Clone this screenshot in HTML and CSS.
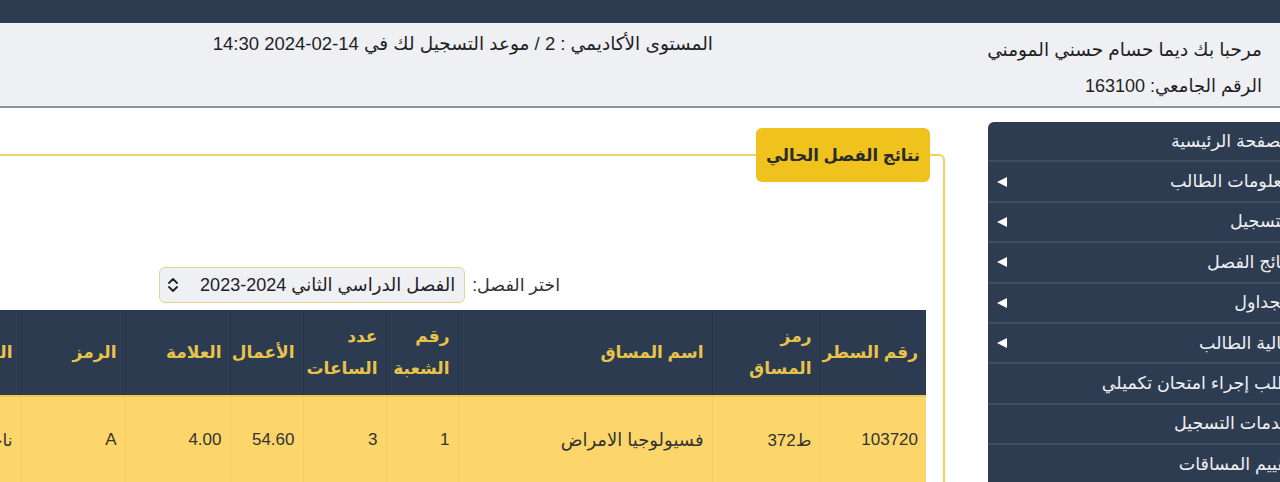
FILE: index.html
```html
<!DOCTYPE html>
<html lang="ar" dir="rtl">
<head>
<meta charset="utf-8">
<title>نتائج الفصل الحالي</title>
<link rel="stylesheet" href="styles.css">
</head>
<body>
<div class="topbar"></div>
<header class="header">
  <div class="user">
    <div>مرحبا بك ديما حسام حسني المومني</div>
    <div>الرقم الجامعي: 163100</div>
  </div>
  <div class="level">المستوى الأكاديمي : 2 / موعد التسجيل لك في 14-02-2024 14:30</div>
</header>
<div class="main">
  <nav class="sidebar">
    <a class="nav-item">الصفحة الرئيسية</a>
    <a class="nav-item">معلومات الطالب<svg class="arrow" viewBox="0 0 10 10" width="10" height="10"><polygon points="0,5 10,0 10,10"/></svg></a>
    <a class="nav-item">التسجيل<svg class="arrow" viewBox="0 0 10 10" width="10" height="10"><polygon points="0,5 10,0 10,10"/></svg></a>
    <a class="nav-item">نتائج الفصل<svg class="arrow" viewBox="0 0 10 10" width="10" height="10"><polygon points="0,5 10,0 10,10"/></svg></a>
    <a class="nav-item">الجداول<svg class="arrow" viewBox="0 0 10 10" width="10" height="10"><polygon points="0,5 10,0 10,10"/></svg></a>
    <a class="nav-item">مالية الطالب<svg class="arrow" viewBox="0 0 10 10" width="10" height="10"><polygon points="0,5 10,0 10,10"/></svg></a>
    <a class="nav-item">طلب إجراء امتحان تكميلي</a>
    <a class="nav-item">خدمات التسجيل</a>
    <a class="nav-item">تقييم المساقات</a>
    <a class="nav-item">تسجيل الخروج</a>
  </nav>
  <section class="content">
    <fieldset class="panel">
      <legend class="panel-title">نتائج الفصل الحالي</legend>
      <div class="term-row">
        <label class="term-label">اختر الفصل:</label>
        <div class="select-wrap">
          <select class="term-select">
            <option>الفصل الدراسي الثاني 2024-2023</option>
          </select>
          <svg class="chev" viewBox="0 0 12 16" width="12" height="16"><path d="M2 6 L6 2 L10 6 M2 10 L6 14 L10 10" fill="none" stroke="#222" stroke-width="1.8" stroke-linecap="round" stroke-linejoin="round"/></svg>
        </div>
      </div>
      <table class="results">
        <colgroup>
          <col class="c1"><col class="c2"><col class="c3"><col class="c4"><col class="c5"><col class="c6"><col class="c7"><col class="c8"><col class="c9">
        </colgroup>
        <thead>
          <tr>
            <th>رقم السطر</th>
            <th>رمز<br>المساق</th>
            <th>اسم المساق</th>
            <th>رقم<br>الشعبة</th>
            <th>عدد<br>الساعات</th>
            <th>الأعمال</th>
            <th>العلامة</th>
            <th>الرمز</th>
            <th>النتيجة</th>
          </tr>
        </thead>
        <tbody>
          <tr>
            <td>103720</td>
            <td>&#x637;372</td>
            <td>فسيولوجيا الامراض</td>
            <td>1</td>
            <td>3</td>
            <td>54.60</td>
            <td>4.00</td>
            <td>A</td>
            <td>ناجح</td>
          </tr>
        </tbody>
      </table>
    </fieldset>
  </section>
</div>
</body>
</html>
```

FILE: styles.css
```css
html, body {
  margin: 0;
  padding: 0;
}
body {
  direction: rtl;
  width: 1280px;
  overflow: hidden;
  background: #ffffff;
  font-family: "Liberation Sans", "DejaVu Sans", sans-serif;
  color: #222;
}
.topbar {
  height: 23px;
  background: #2d3c50;
}
.header {
  height: 74px;
  padding-top: 9px;
  background: #eff0f4;
  border-bottom: 2px solid #8f9195;
  display: flex;
  align-items: flex-start;
  font-size: 18.5px;
  color: #1f1f1f;
}
.user {
  flex: 0 0 567px;
  padding-right: 18px;
  box-sizing: border-box;
  line-height: 36px;
}
.user div:last-child {
  font-size: 18px;
}
.level {
  line-height: 24px;
}
.main {
  display: flex;
  align-items: flex-start;
  gap: 43px;
  padding-top: 14px;
  overflow: hidden;
  height: 400px;
}
.sidebar {
  flex: 0 0 312px;
  margin-right: -20px;
  background: #2d3c50;
  border-top-left-radius: 6px;
  display: flex;
  flex-direction: column;
}
.nav-item {
  display: flex;
  align-items: center;
  justify-content: space-between;
  height: 38.4px;
  border-bottom: 2px solid #3e4f64;
  padding: 0 9px;
  color: #eef0f3;
  font-size: 17.5px;
  white-space: nowrap;
}
.arrow {
  fill: #ffffff;
  width: 10px;
  height: 10px;
}
.content {
  flex: 0 0 1100px;
  padding-top: 6px;
}
.panel {
  margin: 0;
  border: 2px solid #ecd362;
  border-radius: 6px;
  padding: 0 13px 20px 13px;
  min-width: 0;
}
.panel-title {
  padding: 0 10px;
  height: 54px;
  line-height: 54px;
  background: #f0c21e;
  border-radius: 6px;
  font-weight: bold;
  font-size: 16.5px;
  color: #2a2a2a;
}
.term-row {
  display: flex;
  align-items: center;
  gap: 7px;
  margin-top: 85px;
  padding-right: 370px;
  font-size: 17.5px;
}
.term-label {
  color: #333;
}
.select-wrap {
  position: relative;
  width: 306px;
  height: 36px;
}
.term-select {
  appearance: none;
  -webkit-appearance: none;
  width: 100%;
  height: 36px;
  box-sizing: border-box;
  border: 1px solid #e4d48f;
  border-radius: 6px;
  background: #eef0f3;
  padding: 0 9px 0 30px;
  font-family: "Liberation Sans", "DejaVu Sans", sans-serif;
  font-size: 18px;
  color: #222;
  direction: rtl;
}
.chev {
  position: absolute;
  left: 8px;
  top: 10px;
  pointer-events: none;
}
.results {
  margin-top: 7px;
  margin-right: 4px;
  border-collapse: collapse;
  table-layout: fixed;
  width: 1025px;
}
.c1 { width: 106px; }
.c2 { width: 108px; }
.c3 { width: 254px; }
.c4 { width: 72px; }
.c5 { width: 83px; }
.c6 { width: 73px; }
.c7 { width: 105px; }
.c8 { width: 104px; }
.c9 { width: 120px; }
.results th {
  background: #2c3b4f;
  color: #e8c34b;
  font-weight: bold;
  font-size: 17px;
  line-height: 32px;
  height: 86px;
  padding: 0 8px;
  box-sizing: border-box;
  text-align: right;
  vertical-align: middle;
  border-left: 1px solid #27354a;
  white-space: nowrap;
}
.results td {
  background: #fdd66b;
  color: #333;
  font-size: 17px;
  height: 86px;
  padding: 0 8px;
  text-align: right;
  vertical-align: middle;
  border-left: 1px solid #f3cd63;
  border-top: 2px solid #f0c85a;
  white-space: nowrap;
}
.results td:nth-child(3) {
  font-size: 18px;
}
```
